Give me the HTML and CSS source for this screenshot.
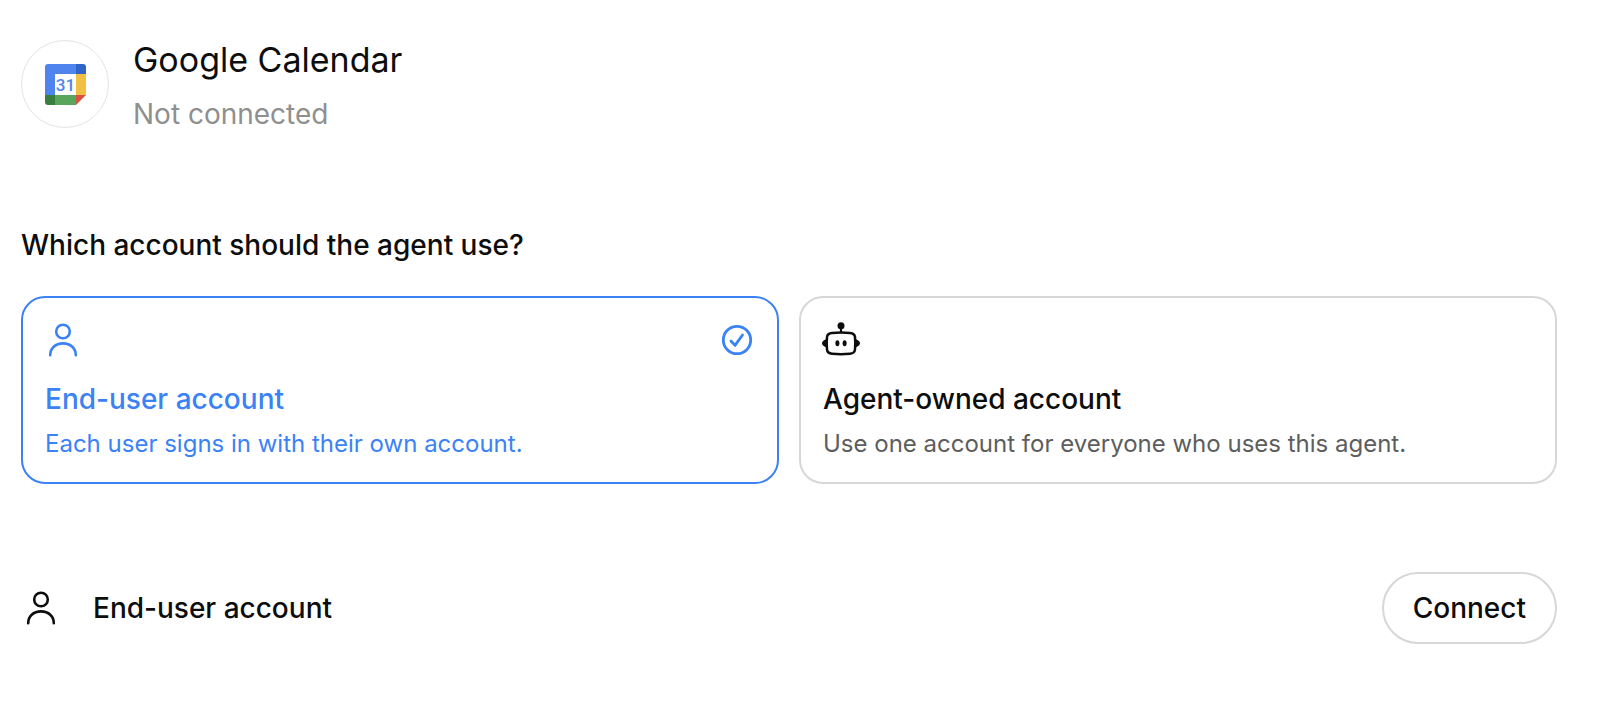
FILE: index.html
```html
<!DOCTYPE html>
<html lang="en">
<head>
<meta charset="utf-8">
<meta name="viewport" content="width=device-width, initial-scale=1">
<title>Google Calendar</title>
<link rel="stylesheet" href="styles.css">
</head>
<body>
<svg class="sprite" aria-hidden="true">
  <symbol id="icon-user" viewBox="0 0 36 36">
    <circle cx="18" cy="9.500" r="6.800" fill="none" stroke="currentColor" stroke-width="2.600"/>
    <path d="M5.200 33.200C5.200 26.500 10.300 21.400 18 21.400S30.800 26.500 30.800 33.200" fill="none" stroke="currentColor" stroke-width="2.600" stroke-linecap="round"/>
  </symbol>
</svg>
<main class="page">
  <header class="integration">
    <div class="logo">
      <svg class="logo-mark" viewBox="0 0 41 41" role="img" aria-label="Google Calendar logo">
        <path fill="#fff" d="M9 9h23v23H9z"/>
        <path fill="#4f84ee" d="M3 0H31V10H10V31H0V3A3 3 0 0 1 3 0z"/>
        <path fill="#3164c8" d="M31 0H38A3 3 0 0 1 41 3V10H31z"/>
        <path fill="#f3bf42" d="M31 10H41V31H31z"/>
        <path fill="#58a55c" d="M10 31H31V41H10z"/>
        <path fill="#3b7d3f" d="M0 31H10V41H3A3 3 0 0 1 0 38z"/>
        <path fill="#d95140" d="M31 31H41L31 41z"/>
        <text class="logo-day" x="20.500" y="27" text-anchor="middle">31</text>
      </svg>
    </div>
    <div class="integration-text">
      <h1 class="integration-name">Google Calendar</h1>
      <p class="integration-status">Not connected</p>
    </div>
  </header>

  <fieldset class="chooser">
    <legend class="question">Which account should the agent use?</legend>
    <div class="options">
      <label class="option">
        <input class="option-input" type="radio" name="account" value="end-user" checked>
        <span class="option-icons">
          <svg class="icon" aria-hidden="true"><use href="#icon-user"/></svg>
          <svg class="icon option-check" viewBox="0 0 36 36" aria-hidden="true">
            <circle cx="18" cy="18" r="13.700" fill="none" stroke="currentColor" stroke-width="2.800"/>
            <path d="M12 19L16 23.400L23.500 13" fill="none" stroke="currentColor" stroke-width="2.800" stroke-linecap="round" stroke-linejoin="round"/>
          </svg>
        </span>
        <span class="option-title">End-user account</span>
        <span class="option-note">Each user signs in with their own account.</span>
      </label>
      <label class="option">
        <input class="option-input" type="radio" name="account" value="agent">
        <span class="option-icons">
          <svg class="icon" viewBox="0 0 36 36" aria-hidden="true">
            <circle cx="18" cy="3.800" r="3.500" fill="currentColor"/>
            <path d="M18 5V11" stroke="currentColor" stroke-width="2.200"/>
            <path d="M9 11Q18 10.200 27 11Q31.600 11.400 32 15Q32.600 21 32 27.500Q31.600 31.300 27 31.800Q18 32.600 9 31.800Q4.400 31.300 4 27.500Q3.400 21 4 15Q4.400 11.400 9 11z" fill="none" stroke="currentColor" stroke-width="2.500"/>
            <path d="M4 17.200C2 17.200 -1 19.200 -1 21.200S2 25.200 4 25.200zM32 17.200C34 17.200 37 19.200 37 21.200S34 25.200 32 25.200z" fill="currentColor"/>
            <ellipse cx="14.400" cy="21.200" rx="2" ry="3" fill="currentColor"/>
            <ellipse cx="21.600" cy="21.200" rx="2" ry="3" fill="currentColor"/>
          </svg>
        </span>
        <span class="option-title">Agent-owned account</span>
        <span class="option-note">Use one account for everyone who uses this agent.</span>
      </label>
    </div>
  </fieldset>

  <section class="connection">
    <svg class="icon" aria-hidden="true"><use href="#icon-user"/></svg>
    <span class="connection-name">End-user account</span>
    <button class="connect" type="button">Connect</button>
  </section>
</main>
</body>
</html>
```
FILE: styles.css
```css
* {
  box-sizing: border-box;
}

body {
  margin: 0;
  background: #fff;
  color: #0d0d0d;
  font-family: Inter, "Liberation Sans", sans-serif;
  font-size: 28px;
  line-height: 36px;
}

.sprite {
  display: none;
}

.page {
  padding: 36px 55px 36px 21px;
}

.integration {
  display: flex;
  align-items: center;
  gap: 24px;
}

.logo {
  display: flex;
  align-items: center;
  justify-content: center;
  flex: none;
  width: 88px;
  height: 88px;
  border: 1px solid #e3e3e3;
  border-radius: 50%;
}

.logo-mark {
  width: 41px;
  height: 41px;
}

.logo-day {
  fill: #4f84ee;
  font-family: Roboto, sans-serif;
  font-size: 17px;
  font-weight: 500;
}

.integration-text {
  display: flex;
  flex-direction: column;
  gap: 12px;
}

.integration-name {
  margin: 0;
  font-size: 34px;
  font-weight: 400;
  line-height: 48px;
}

.integration-status {
  margin: 0;
  color: #8f8f8f;
}

.chooser {
  min-width: 0;
  margin: 95px 0 0;
  padding: 0;
  border: 0;
}

.question {
  padding: 0;
  margin-bottom: 33px;
  font-weight: 500;
}

.options {
  display: grid;
  grid-template-columns: 1fr 1fr;
  gap: 20px;
}

.option {
  display: flex;
  flex-direction: column;
  padding: 24px 22px 22px;
  border: 2px solid #d7d7d7;
  border-radius: 24px;
  cursor: pointer;
}

.option:has(.option-input:checked) {
  border-color: #3b82f6;
  color: #3b82f6;
}

.option-input {
  position: absolute;
  opacity: 0;
  pointer-events: none;
}

.option-icons {
  display: flex;
  justify-content: space-between;
  margin-bottom: 23px;
}

.icon {
  display: block;
  flex: none;
  width: 36px;
  height: 36px;
  overflow: visible;
}

.option-title {
  margin-bottom: 11px;
  font-weight: 500;
}

.option-note {
  color: #5d5d5d;
  font-size: 24px;
  line-height: 32px;
}

.option-input:checked ~ .option-note {
  color: inherit;
}

.connection {
  display: flex;
  align-items: center;
  margin-top: 88px;
  padding-left: 2px;
}

.connection-name {
  flex: 1;
  margin-left: 34px;
  font-weight: 500;
}

.connect {
  height: 72px;
  padding: 0 29px;
  border: 2px solid #d7d7d7;
  border-radius: 36px;
  background: #fff;
  color: inherit;
  font: inherit;
  font-weight: 500;
  cursor: pointer;
}
```
